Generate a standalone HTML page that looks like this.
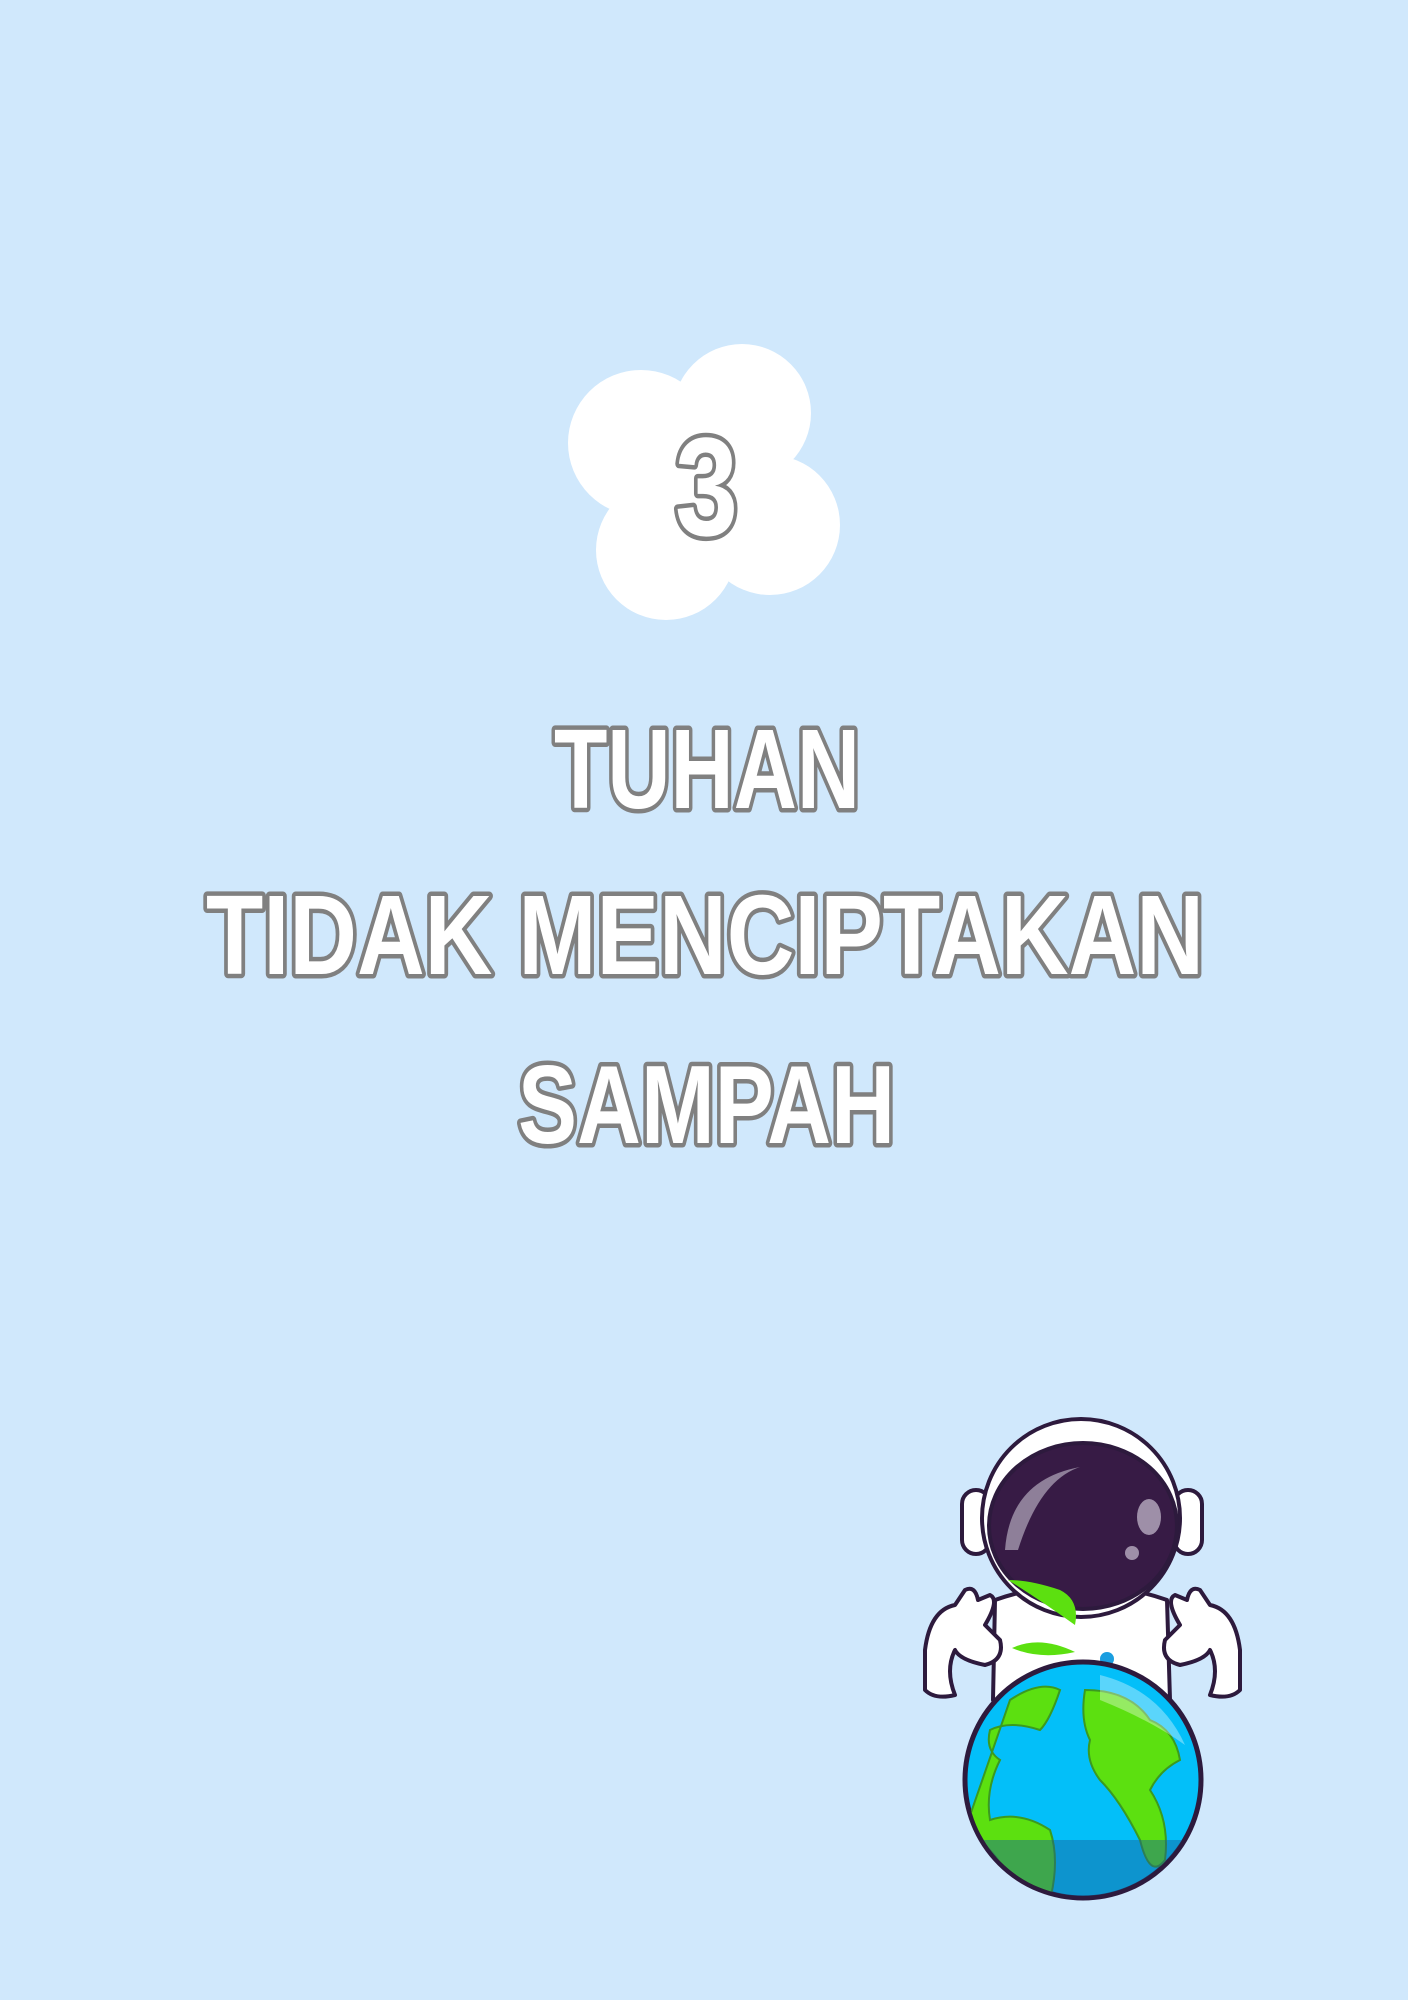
<!DOCTYPE html>
<html><head><meta charset="utf-8"><style>
html,body{margin:0;padding:0;background:#d0e8fc;}
body{width:1408px;height:2000px;position:relative;overflow:hidden;}
svg{position:absolute;left:0;top:0;}
</style></head><body>
<svg width="1408" height="2000" viewBox="0 0 1408 2000">
<rect width="1408" height="2000" fill="#d0e8fc"/>
<g fill="#fff">
<circle cx="641" cy="443" r="73"/>
<circle cx="742" cy="413" r="69"/>
<circle cx="666" cy="550" r="70"/>
<circle cx="770" cy="525" r="70"/>
<circle cx="705" cy="480" r="80"/>
</g>
<g font-family="Liberation Sans, sans-serif" font-weight="bold" fill="#fff" stroke="#808080" stroke-width="9" stroke-linejoin="round" style="paint-order:stroke">
<text x="675" y="535" font-size="140" textLength="63" lengthAdjust="spacingAndGlyphs">3</text>
<text x="554" y="808" font-size="113" textLength="306" lengthAdjust="spacingAndGlyphs">TUHAN</text>
<text x="206" y="974" font-size="113" textLength="998" lengthAdjust="spacingAndGlyphs">TIDAK MENCIPTAKAN</text>
<text x="518" y="1143" font-size="111" textLength="377" lengthAdjust="spacingAndGlyphs">SAMPAH</text>
</g>
<g stroke="#2d1a3d" stroke-width="4" stroke-linejoin="round">
<rect x="962" y="1490" width="28" height="64" rx="14" fill="#fff"/>
<rect x="1174" y="1490" width="28" height="64" rx="14" fill="#fff"/>
<path d="M995 1600 Q1080 1570 1167 1600 L1170 1700 L993 1700 Z" fill="#fff"/>
<path d="M925 1650 Q930 1610 955 1605 L965 1590 Q975 1585 978 1600 L990 1595 Q1000 1600 985 1625 L1000 1640 Q1005 1660 985 1665 Q960 1660 955 1650 Q945 1670 955 1695 Q935 1700 925 1690 Z" fill="#fff"/>
<path d="M1240 1650 Q1235 1610 1210 1605 L1200 1590 Q1190 1585 1187 1600 L1175 1595 Q1165 1600 1180 1625 L1165 1640 Q1160 1660 1180 1665 Q1205 1660 1210 1650 Q1220 1670 1210 1695 Q1230 1700 1240 1690 Z" fill="#fff"/>
<circle cx="1081" cy="1518" r="99" fill="#fff"/>
<ellipse cx="1083" cy="1526" rx="94" ry="83" fill="#371b45"/>
</g>
<path d="M1005 1550 Q1010 1480 1080 1467 Q1040 1480 1018 1550 Z" fill="#8e7f99"/>
<ellipse cx="1149" cy="1517" rx="12" ry="18" fill="#9e8fa8"/>
<circle cx="1132" cy="1553" r="7" fill="#9e8fa8"/>
<path d="M1008 1580 Q1040 1600 1075 1625 Q1080 1600 1060 1590 Q1030 1580 1008 1580 Z" fill="#5ce010"/>
<path d="M1012 1648 Q1040 1635 1075 1652 Q1040 1660 1012 1648 Z" fill="#5ce010"/>
<circle cx="1107" cy="1659" r="7" fill="#1a9ee0"/>
<circle cx="1083" cy="1780" r="118" fill="#03bff9" stroke="#2d1a3d" stroke-width="5"/>
<clipPath id="g"><circle cx="1083" cy="1780" r="116"/></clipPath>
<g clip-path="url(#g)">
<path d="M1010 1700 Q1040 1680 1060 1690 Q1050 1720 1040 1730 Q1010 1720 990 1730 Q985 1750 1000 1760 Q985 1790 990 1820 Q1020 1810 1050 1830 Q1060 1860 1050 1900 L1020 1900 Q1000 1850 965 1830 Z" fill="#5ce010" stroke="#3b9a20" stroke-width="2"/>
<path d="M1085 1690 Q1130 1690 1150 1720 Q1175 1730 1180 1760 Q1160 1770 1150 1790 Q1170 1820 1165 1860 Q1150 1880 1140 1840 Q1120 1800 1100 1780 Q1085 1760 1090 1740 Q1080 1720 1085 1690 Z" fill="#5ce010" stroke="#3b9a20" stroke-width="2"/>
<rect x="960" y="1840" width="250" height="70" fill="#1a5f9a" opacity="0.45"/>
</g>
<path d="M1100 1675 Q1160 1690 1185 1745 Q1150 1720 1100 1700 Z" fill="#fff" opacity="0.35"/>
</svg>
</body></html>
